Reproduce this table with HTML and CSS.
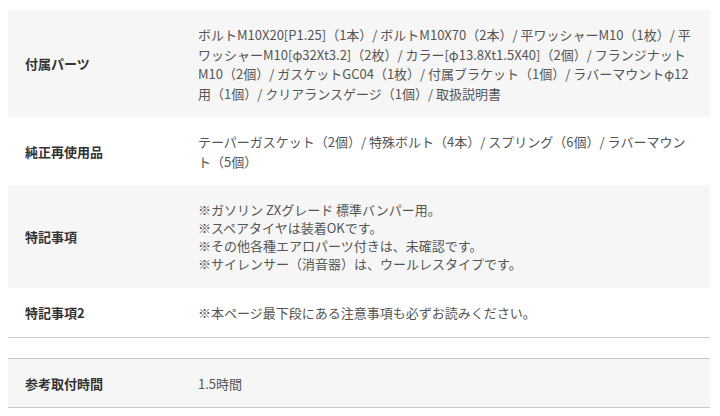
FILE: index.html
```html
<!DOCTYPE html>
<html lang="ja">
<head>
    <meta charset="UTF-8">
    <meta name="viewport" content="width=device-width, initial-scale=1.0">
    <title>商品仕様</title>
    <link rel="stylesheet" href="styles.css">
</head>
<body>
    <div class="wrap">
        <table class="spec">
            <tr class="shade">
                <th>付属パーツ</th>
                <td>ボルトM10X20[P1.25]（1本）/ ボルトM10X70（2本）/ 平ワッシャーM10（1枚）/ 平ワッシャーM10[φ32Xt3.2]（2枚）/ カラー[φ13.8Xt1.5X40]（2個）/ フランジナットM10（2個）/ ガスケットGC04（1枚）/ 付属ブラケット（1個）/ ラバーマウントφ12用（1個）/ クリアランスゲージ（1個）/ 取扱説明書</td>
            </tr>
            <tr>
                <th>純正再使用品</th>
                <td>テーパーガスケット（2個）/ 特殊ボルト（4本）/ スプリング（6個）/ ラバーマウント（5個）</td>
            </tr>
            <tr class="shade">
                <th>特記事項</th>
                <td class="notes">
                    ※ガソリン ZXグレード 標準バンパー用。<br>
                    ※スペアタイヤは装着OKです。<br>
                    ※その他各種エアロパーツ付きは、未確認です。<br>
                    ※サイレンサー（消音器）は、ウールレスタイプです。
                </td>
            </tr>
            <tr class="last">
                <th>特記事項2</th>
                <td>※本ページ最下段にある注意事項も必ずお読みください。</td>
            </tr>
        </table>

        <table class="spec boxed">
            <tr class="shade">
                <th>参考取付時間</th>
                <td>1.5時間</td>
            </tr>
        </table>
    </div>
</body>
</html>
```

FILE: styles.css
```css
body {
    margin: 0;
    background: #fff;
    font-family: "Noto Sans CJK JP", "Noto Sans", sans-serif;
    font-size: 13px;
    color: #555;
}
.wrap {
    padding: 10px 10px 0 8px;
}
.spec {
    width: 100%;
    border-collapse: collapse;
}
.spec th,
.spec td {
    padding: 15px 15px 14px 17px;
    line-height: 19.5px;
    vertical-align: middle;
    text-align: left;
}
.spec th {
    width: 141px;
    color: #333;
    font-weight: bold;
}
.spec td {
    color: #555;
}
.shade {
    background-color: #f6f6f6;
}
.notes {
    line-height: 18px !important;
    padding-top: 16px !important;
    padding-bottom: 15px !important;
}
.last {
    border-bottom: 1px solid #c8c8c8;
}
.boxed {
    margin-top: 20px;
    border-top: 1px solid #c8c8c8;
    border-bottom: 1px solid #c8c8c8;
}
```
